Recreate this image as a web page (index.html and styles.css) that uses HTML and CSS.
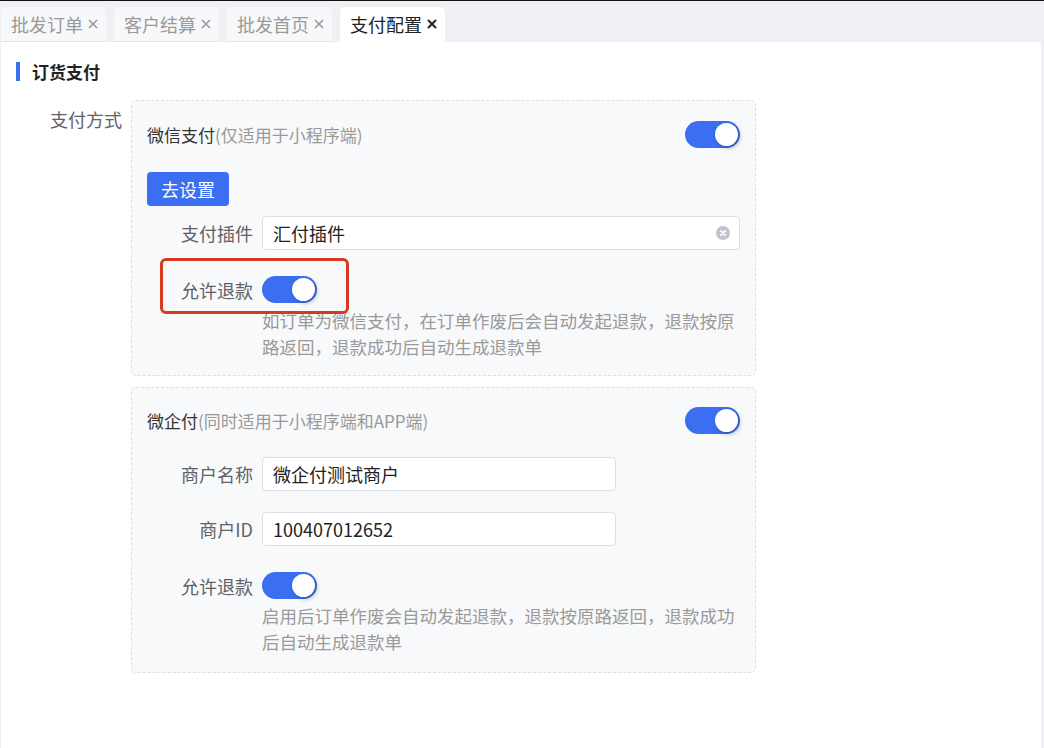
FILE: index.html
```html
<!DOCTYPE html>
<html lang="zh-CN">
<head>
<meta charset="UTF-8" />
<meta name="viewport" content="width=device-width, initial-scale=1" />
<title>支付配置</title>
<link rel="stylesheet" href="styles.css">
</head>
<body>
<nav class="tabs">
  <div class="tab">批发订单<svg class="tab-close" viewBox="0 0 10 10"><path d="M1 1L9 9M9 1L1 9"/></svg></div>
  <div class="tab">客户结算<svg class="tab-close" viewBox="0 0 10 10"><path d="M1 1L9 9M9 1L1 9"/></svg></div>
  <div class="tab">批发首页<svg class="tab-close" viewBox="0 0 10 10"><path d="M1 1L9 9M9 1L1 9"/></svg></div>
  <div class="tab active">支付配置<svg class="tab-close" viewBox="0 0 10 10"><path d="M1 1L9 9M9 1L1 9"/></svg></div>
</nav>

<main class="page">
  <h2 class="block-title">订货支付</h2>

  <div class="form-row">
    <label class="form-label">支付方式</label>
    <div class="pay-list">

      <!-- 微信支付 -->
      <section class="pay-card">
        <div class="card-head">
          <div class="card-title">微信支付<span class="sub">(仅适用于小程序端)</span></div>
          <span class="switch on"></span>
        </div>
        <button class="btn-primary">去设置</button>
        <div class="field">
          <span class="field-label">支付插件</span>
          <div class="input wide">汇付插件
            <svg class="clear" viewBox="0 0 14 14"><circle cx="7" cy="7" r="7"/><path d="M4.8 4.8L9.2 9.2M9.2 4.8L4.8 9.2"/></svg>
          </div>
        </div>
        <div class="field switch-field">
          <span class="field-label">允许退款</span>
          <span class="switch on"></span>
          <span class="highlight"></span>
        </div>
        <p class="tip">如订单为微信支付，在订单作废后会自动发起退款，退款按原路返回，退款成功后自动生成退款单</p>
      </section>

      <!-- 微企付 -->
      <section class="pay-card second">
        <div class="card-head">
          <div class="card-title">微企付<span class="sub">(同时适用于小程序端和APP端)</span></div>
          <span class="switch on"></span>
        </div>
        <div class="field first">
          <span class="field-label">商户名称</span>
          <div class="input">微企付测试商户</div>
        </div>
        <div class="field near">
          <span class="field-label">商户ID</span>
          <div class="input">100407012652</div>
        </div>
        <div class="field switch-field">
          <span class="field-label">允许退款</span>
          <span class="switch on"></span>
        </div>
        <p class="tip tight">启用后订单作废会自动发起退款，退款按原路返回，退款成功后自动生成退款单</p>
      </section>

    </div>
  </div>
</main>
</body>
</html>
```

FILE: styles.css
```css
html, body {
  margin: 0;
  padding: 0;
  height: 100%;
}
body {
  font-family: "Noto Sans CJK SC", "Noto Sans", sans-serif;
  background: #eff0f3;
  border-top: 1px solid #111;
  box-sizing: border-box;
  color: #333;
  overflow: hidden;
}
.tabs {
  display: flex;
  gap: 8px;
  padding: 6px 0 0 1px;
  height: 35px;
}
.tab {
  display: flex;
  align-items: center;
  width: 105px;
  box-sizing: border-box;
  height: 35px;
  padding-left: 10px;
  background: #f7f8fa;
  border-bottom: 1px solid #dfe1e6;
  border-radius: 5px 5px 0 0;
  font-size: 18px;
  color: #9a9a9a;
  white-space: nowrap;
}
.tab-close {
  width: 10px;
  height: 10px;
  margin-left: 5px;
  fill: none;
  stroke: #9a9a9a;
  stroke-width: 1.6;
}
.tab.active {
  background: #fff;
  border-bottom-color: #fff;
  color: #222;
}
.tab.active .tab-close {
  stroke: #222;
  stroke-width: 2;
}

.page {
  background: #fff;
  margin: 0 3px 0 1px;
  height: calc(100% - 41px);
  padding: 20px 0 0 0;
  box-sizing: border-box;
}
.block-title {
  margin: 0 0 19px 15px;
  padding-left: 12px;
  border-left: 4px solid #3b6ef0;
  font-size: 17px;
  line-height: 19px;
  font-weight: bold;
  color: #222;
}

.form-row {
  display: flex;
  align-items: flex-start;
}
.form-label {
  width: 130px;
  flex: none;
  text-align: right;
  padding-right: 9px;
  box-sizing: border-box;
  font-size: 18px;
  line-height: 28px;
  margin-top: 5px;
  color: #606266;
}
.pay-list {
  display: flex;
  flex-direction: column;
  gap: 11px;
  width: 625px;
}
.pay-card {
  position: relative;
  background: #f8f9fb;
  border: 1px dashed #dcdfe6;
  border-radius: 5px;
  padding: 19px 15px 15px 15px;
}
.pay-card.second {
  padding-top: 18px;
  padding-bottom: 17px;
}
.card-head {
  display: flex;
  justify-content: space-between;
  align-items: center;
  height: 28px;
}
.card-title {
  font-size: 17px;
  color: #333;
}
.card-title .sub {
  color: #999;
}

.switch {
  position: relative;
  display: inline-block;
  width: 55px;
  height: 27px;
  border-radius: 14px;
  background: #3b6ef0;
}
.switch::after {
  content: "";
  position: absolute;
  top: 2px;
  right: 2px;
  width: 23px;
  height: 23px;
  border-radius: 50%;
  background: #fff;
  box-shadow: 2px 2px 4px rgba(0, 0, 0, 0.25);
}

.btn-primary {
  display: block;
  margin-top: 24px;
  width: 82px;
  height: 34px;
  border: none;
  border-radius: 4px;
  background: #3b6ef0;
  color: #fff;
  font-family: inherit;
  font-size: 18px;
  padding: 0;
}

.field {
  position: relative;
  display: flex;
  align-items: center;
  margin-top: 10px;
}
.field.first {
  margin-top: 23px;
}
.field.near {
  margin-top: 21px;
}
.field.switch-field {
  margin-top: 26px;
}
.field-label {
  width: 115px;
  flex: none;
  text-align: right;
  padding-right: 9px;
  box-sizing: border-box;
  font-size: 18px;
  color: #606266;
}
.input {
  position: relative;
  box-sizing: border-box;
  width: 354px;
  height: 34px;
  padding-left: 10px;
  background: #fff;
  border: 1px solid #dcdfe6;
  border-radius: 4px;
  font-size: 18px;
  line-height: 32px;
  color: #222;
}
.input.wide {
  width: 478px;
}
.clear {
  position: absolute;
  right: 9px;
  top: 9px;
  width: 14px;
  height: 14px;
}
.clear circle {
  fill: #c0c4cc;
}
.clear path {
  stroke: #fff;
  stroke-width: 1.8;
  stroke-linecap: round;
}
.highlight {
  position: absolute;
  left: 13px;
  top: -18px;
  width: 189px;
  height: 56px;
  box-sizing: border-box;
  border: 3px solid #d83a1f;
  border-radius: 6px;
}

.tip {
  margin: 5px 0 0 115px;
  font-size: 17.5px;
  line-height: 26px;
  color: #9a9a9a;
}
.tip.tight {
  margin-top: 4px;
}
```
